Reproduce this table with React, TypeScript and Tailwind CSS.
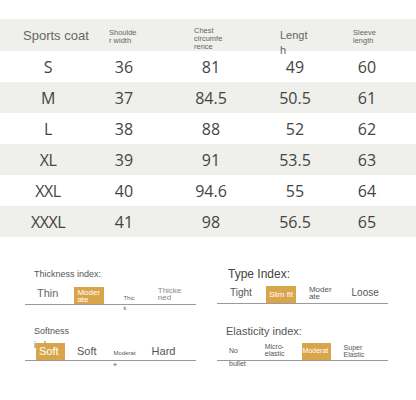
const ROWS = [
  ["S", "36", "81", "49", "60"],
  ["M", "37", "84.5", "50.5", "61"],
  ["L", "38", "88", "52", "62"],
  ["XL", "39", "91", "53.5", "63"],
  ["XXL", "40", "94.6", "55", "64"],
  ["XXXL", "41", "98", "56.5", "65"],
];

const COLS = ["w-[80px]", "w-[72px]", "w-[102px]", "w-[66px]", "w-[78px]"];

function Box({ children }: { children: React.ReactNode }) {
  return (
    <div className="bg-[#d9a54b] text-white h-[17px] w-[30px] flex items-center px-[3px] leading-[7px]">
      {children}
    </div>
  );
}

export default function App() {
  return (
    <div className="w-[416px] h-[400px] bg-white overflow-hidden font-['Liberation_Sans',Arial,sans-serif] text-[#555]">
      <div className="pt-[19px]">
        <div className="flex h-[32px] bg-[#efefeb] pl-[8px] items-center text-[#666]">
          <div className={`${COLS[0]} pl-[15px] text-[13px] whitespace-nowrap pt-[2px]`}>Sports coat</div>
          <div className={`${COLS[1]} pl-[21px] text-[7.5px] leading-[8px] pt-[3px]`}>Shoulde<br />r width</div>
          <div className={`${COLS[2]} pl-[34px] text-[7.5px] leading-[8px] pt-[7px]`}>Chest<br />circumfe<br />rence</div>
          <div className={`${COLS[3]} pl-[18px] text-[11px] leading-[15px] pt-[15px]`}>Lengt<br />h</div>
          <div className={`${COLS[4]} pl-[25px] text-[7.5px] leading-[8px] pt-[3px]`}>Sleeve<br />length</div>
        </div>
        {ROWS.map((r, i) => (
          <div
            key={i}
            className={`flex h-[31px] pl-[8px] items-center text-[16px] text-[#444] font-['Open_Sans',sans-serif] ${i % 2 === 1 ? "bg-[#efefeb]" : "bg-white"}`}
          >
            {r.map((c, j) => (
              <div key={j} className={`${COLS[j]} text-center ${j === 0 ? "tracking-[-0.5px]" : ""}`}>{c}</div>
            ))}
          </div>
        ))}
      </div>

      <div className="grid grid-cols-[171px_171px] gap-x-[21px] pl-[25px] mt-[30px]">
        {/* Thickness */}
        <div>
          <div className="pl-[9px] text-[9px] leading-[14px] text-[#555] h-[14px]">Thickness index:</div>
          <div className="flex items-end h-[24px] border-b border-[#9a9a9a] text-[#666]">
            <div className="ml-[12px] text-[11px] mb-[3px]">Thin</div>
            <div className="ml-[16px] text-[8px]"><Box>Moder<br />ate</Box></div>
            <div className="ml-[19px] text-[6px] leading-[10px] mb-[-9px]">Thic<br />k</div>
            <div className="ml-[23px] text-[8px] leading-[7px] mb-[3px] text-[#888]">Thicke<br />ned</div>
          </div>
        </div>
        {/* Type */}
        <div>
          <div className="pl-[11px] text-[12px] text-[#444] h-[14px] leading-[14px]">Type Index:</div>
          <div className="flex items-end h-[23px] border-b border-[#9a9a9a] text-[#555]">
            <div className="ml-[13px] text-[10px] mb-[3px]">Tight</div>
            <div className="ml-[14px] text-[8px]"><Box><span className="whitespace-nowrap leading-[10px]">Slim fit</span></Box></div>
            <div className="ml-[13px] text-[8px] leading-[7px] mb-[3px]">Moder<br />ate</div>
            <div className="ml-[20px] text-[10px] mb-[3px]">Loose</div>
          </div>
        </div>
        {/* Softness */}
        <div className="mt-[19px]">
          <div className="pl-[9px] text-[9px] leading-[14px] text-[#555] h-[20px]">Softness<br />index:</div>
          <div className="flex items-end h-[17px] border-b border-[#9a9a9a] text-[#555]">
            <div className="ml-[11px] text-[11px]"><div className="bg-[#d9a54b] text-white h-[17px] w-[29px] flex items-center pl-[3px]">Soft</div></div>
            <div className="ml-[12px] text-[11px] mb-[1px]">Soft</div>
            <div className="ml-[17px] text-[6px] leading-[11px] mb-[-10px]">Moderat<br />e</div>
            <div className="ml-[16px] text-[11px] mb-[1px]">Hard</div>
          </div>
        </div>
        {/* Elasticity */}
        <div className="mt-[19px]">
          <div className="pl-[9px] text-[11px] leading-[14px] text-[#555] h-[20px]">Elasticity index:</div>
          <div className="flex items-end h-[17px] border-b border-[#9a9a9a] text-[#555]">
            <div className="ml-[12px] text-[7px] leading-[13px] mb-[-10px]">No<br />bullet</div>
            <div className="ml-[19px] text-[7px] leading-[7px] mb-[3px]">Micro-<br />elastic</div>
            <div className="ml-[17px] text-[7px]"><div className="bg-[#d9a54b] text-white h-[17px] w-[29px] flex items-center pl-[1px]">Moderat</div></div>
            <div className="ml-[13px] text-[7px] leading-[7px] mb-[2px]">Super<br />Elastic</div>
          </div>
        </div>
      </div>
    </div>
  );
}
